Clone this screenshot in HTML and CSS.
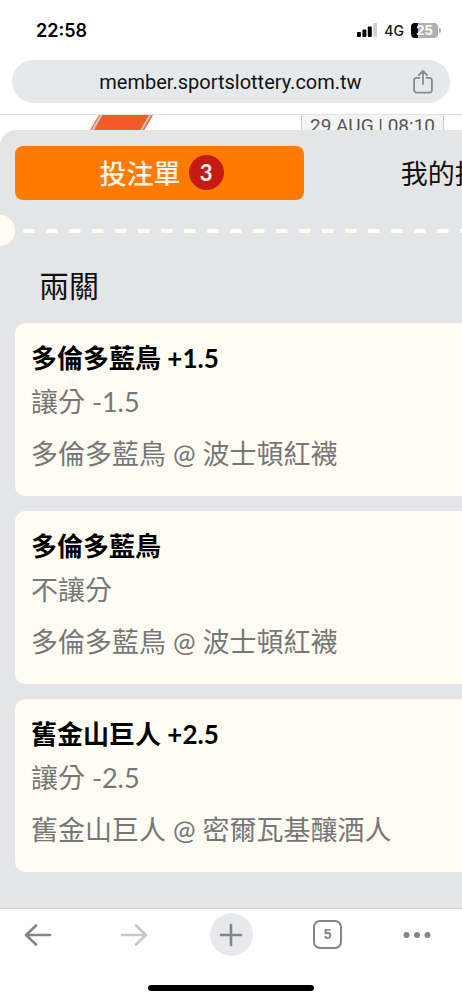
FILE: index.html
```
<!DOCTYPE html>
<html lang="zh-Hant">
<head>
<meta charset="utf-8">
<meta name="viewport" content="width=device-width, initial-scale=1">
<title>投注單</title>
<link rel="stylesheet" href="styles.css">
</head>
<body>
<header class="chrome">
  <div class="status">
    <time class="clock">22:58</time>
    <div class="indicators">
      <svg class="signal" width="20" height="14" viewBox="0 0 20 14" aria-hidden="true">
        <rect x="0" y="9" width="4" height="5" rx="1"/>
        <rect x="5.4" y="6.5" width="4" height="7.5" rx="1"/>
        <rect x="10.8" y="3.5" width="4" height="10.5" rx="1"/>
        <rect x="16.2" y="0" width="4" height="14" rx="1" fill="#d0d0d0"/>
      </svg>
      <span class="network">4G</span>
      <span class="battery">25</span>
    </div>
  </div>
  <div class="address">
    <span class="url">member.sportslottery.com.tw</span>
    <button class="share" aria-label="分享">
      <svg width="20" height="24" viewBox="0 0 20 24" fill="none" stroke="#858b8f" stroke-width="1.8" stroke-linecap="round" stroke-linejoin="round">
        <path d="M6.5 7.8H3.5a2.4 2.4 0 0 0-2.4 2.4v10a2.4 2.4 0 0 0 2.4 2.4h13a2.4 2.4 0 0 0 2.4-2.4v-10a2.4 2.4 0 0 0-2.4-2.4h-3M10 14V1.3M6 5l4-4 4 4"/>
      </svg>
    </button>
  </div>
</header>

<main class="page">
  <div class="match">
    <svg class="stripe" width="64" height="17" viewBox="0 0 64 17" aria-hidden="true">
      <path d="M10 0H64L54 17H0z" fill="#c9c5c3"/>
      <path d="M10 0h1L1 17H0zM62.500 0H64L54 17h-1.500z" fill="#f25c29"/>
      <path d="M13.500 0H60L50 17H4z" fill="#f25c29"/>
    </svg>
    <span class="date">29 AUG | 08:10</span>
  </div>

  <section class="sheet">
    <div class="tabs">
      <button class="tab active">投注單<span class="count">3</span></button>
      <button class="tab">我的投注</button>
    </div>
    <div class="tear"><svg class="dashes" width="100%" height="4" aria-hidden="true"><line x1="0" y1="2" x2="100%" y2="2" stroke="#fffdf3" stroke-width="4" stroke-dasharray="11.500 11.500"/></svg></div>
    <h1 class="heading">兩關</h1>
    <div class="bets">
      <article class="bet">
        <h2 class="pick">多倫多藍鳥 +1.5</h2>
        <p class="market">讓分 -1.5</p>
        <p class="teams">多倫多藍鳥 @ 波士頓紅襪</p>
      </article>
      <article class="bet">
        <h2 class="pick">多倫多藍鳥</h2>
        <p class="market">不讓分</p>
        <p class="teams">多倫多藍鳥 @ 波士頓紅襪</p>
      </article>
      <article class="bet">
        <h2 class="pick">舊金山巨人 +2.5</h2>
        <p class="market">讓分 -2.5</p>
        <p class="teams">舊金山巨人 @ 密爾瓦基釀酒人</p>
      </article>
    </div>
  </section>
</main>

<footer class="toolbar">
  <nav class="actions">
    <button class="action" aria-label="上一頁">
      <svg width="28" height="24" viewBox="0 0 28 24" fill="none" stroke="#80868b" stroke-width="2.600" stroke-linecap="round" stroke-linejoin="round"><path d="M26 12H2M12 2.500L2 12l10 9.500"/></svg>
    </button>
    <button class="action" aria-label="下一頁" disabled>
      <svg width="28" height="24" viewBox="0 0 28 24" fill="none" stroke="#c8c8c8" stroke-width="2.600" stroke-linecap="round" stroke-linejoin="round"><path d="M2 12h24M16 2.500L26 12l-10 9.500"/></svg>
    </button>
    <button class="action add" aria-label="新分頁">
      <svg width="24" height="24" viewBox="0 0 24 24" fill="none" stroke="#80868b" stroke-width="2.600" stroke-linecap="round"><path d="M12 2v20M2 12h20"/></svg>
    </button>
    <button class="action" aria-label="分頁"><span class="tabcount">5</span></button>
    <button class="action more" aria-label="更多">
      <svg width="28" height="8" viewBox="0 0 28 8" fill="#80868b"><circle cx="3.500" cy="4" r="3"/><circle cx="14" cy="4" r="3"/><circle cx="24.500" cy="4" r="3"/></svg>
    </button>
  </nav>
  <div class="home"></div>
</footer>
</body>
</html>
```
FILE: styles.css
```
* { box-sizing: border-box; }
body {
  margin: 0;
  min-height: 100vh;
  display: flex;
  flex-direction: column;
  background: #fff;
  color: #111;
  font-family: Lato, "Noto Sans CJK TC", sans-serif;
}
button {
  margin: 0;
  padding: 0;
  border: 0;
  background: none;
  font: inherit;
  color: inherit;
}
h1, h2, p { margin: 0; }
svg { display: block; }

.chrome {
  padding: 0 12px 11px;
  border-bottom: 1px solid #e0e1e2;
  font-family: Inter, sans-serif;
}
.status {
  height: 60px;
  padding: 0 10px 0 24px;
  display: flex;
  align-items: center;
  justify-content: space-between;
}
.clock {
  font-size: 18px;
  font-weight: 600;
  color: #000;
}
.indicators {
  display: flex;
  align-items: center;
  gap: 7px;
}
.network {
  font-size: 14px;
  font-weight: 500;
}
.battery {
  position: relative;
  width: 27px;
  height: 15px;
  margin-right: 2px;
  border-radius: 4px;
  background: linear-gradient(90deg, #000 25%, #b0b0b0 25%);
  color: #fff;
  font-size: 13px;
  font-weight: 700;
  line-height: 15px;
  text-align: center;
}
.battery::after {
  content: "";
  position: absolute;
  left: 28px;
  top: 5px;
  width: 2px;
  height: 5px;
  border-radius: 0 2px 2px 0;
  background: #b0b0b0;
}
.address {
  height: 43px;
  padding: 0 17px 0 36px;
  display: flex;
  align-items: center;
  border-radius: 22px;
  background: #e6e9ec;
}
.url {
  flex: 1;
  text-align: center;
  font-family: Roboto, sans-serif;
  font-size: 20px;
}

.page {
  flex: 1;
  display: flex;
  flex-direction: column;
  overflow: hidden;
}
.match {
  height: 15px;
  padding: 0 18px 0 89px;
  display: flex;
  align-items: flex-start;
  justify-content: space-between;
}
.date {
  padding: 0 8px;
  border: 1px solid #ccc;
  border-width: 0 1px;
  background: #f4f4f4;
  color: #555;
  font-family: Roboto, sans-serif;
  font-size: 19px;
  line-height: 22px;
  white-space: nowrap;
}

.sheet {
  position: relative;
  flex: 1;
  width: 133vw;
  padding: 16px 15px 36px;
  border-radius: 16px 16px 0 0;
  background: #e4e5e7;
}
.tabs {
  display: grid;
  grid-template-columns: 1fr 1fr;
  gap: 6px;
}
.tab {
  height: 54px;
  padding-bottom: 2px;
  display: flex;
  align-items: center;
  justify-content: center;
  gap: 8px;
  border-radius: 8px;
  font-size: 27px;
}
.active {
  padding-left: 4px;
  background: #ff7a00;
  color: #fff4e8;
  font-weight: 500;
}
.count {
  width: 35px;
  height: 35px;
  border-radius: 50%;
  background: #c41c12;
  font-size: 22px;
  font-weight: 700;
  line-height: 35px;
}
.tear {
  height: 31px;
  margin: 15px 0 0 -15px;
  display: flex;
  align-items: center;
  gap: 8px;
}
.tear::before {
  content: "";
  width: 15px;
  height: 31px;
  border-radius: 0 16px 16px 0;
  background: #fffdf3;
}
.dashes { flex: 1; }
.heading {
  margin: 19px 0 18px 24px;
  font-size: 30px;
  font-weight: 400;
  line-height: 40px;
}
.bets {
  display: grid;
  gap: 15px;
}
.bet {
  padding: 15px 16px 22px;
  border-radius: 10px;
  background: #fffdf3;
  white-space: nowrap;
}
.pick {
  color: #000;
  font-size: 26px;
  font-weight: 700;
  line-height: 40px;
}
.market, .teams {
  color: #777;
  font-size: 27px;
  line-height: 40px;
}
.market { margin: 4px 0 12px; }

.toolbar {
  padding: 4px 0 10px;
  border-top: 1px solid #d6d7d9;
  background: #fff;
}
.actions {
  padding: 0 16px;
  display: flex;
  justify-content: space-between;
}
.action {
  width: 43px;
  height: 43px;
  display: flex;
  align-items: center;
  justify-content: center;
  border-radius: 50%;
}
.add { background: #e8e9ed; }
.more { justify-content: flex-start; }
.tabcount {
  width: 29px;
  height: 29px;
  border: 2px solid #80868b;
  border-radius: 7px;
  color: #80868b;
  font: 700 14px/25px "Liberation Sans", sans-serif;
}
.home {
  width: 36%;
  height: 6px;
  margin: 29px auto 0;
  border-radius: 3px;
  background: #000;
}
```
